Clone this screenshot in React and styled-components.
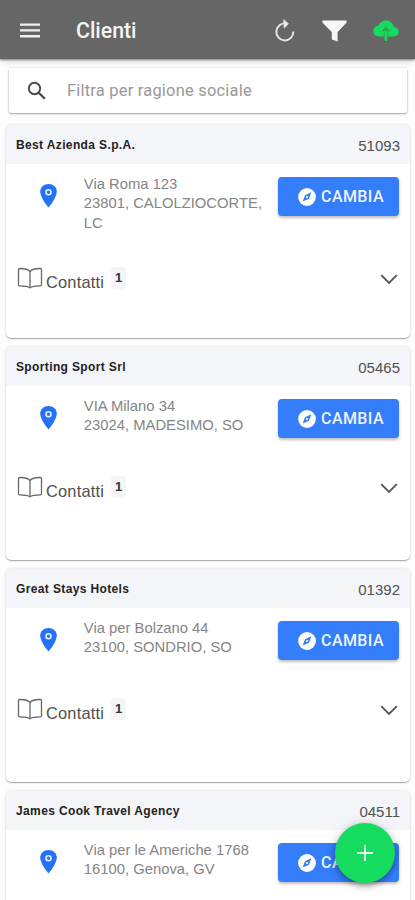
import React from "react";
import styled, { createGlobalStyle } from "styled-components";

const GlobalStyle = createGlobalStyle`
  * {
    box-sizing: border-box;
  }

  body {
    margin: 0;
    background: #fdfdfd;
    font-family: "Liberation Sans", Arial, sans-serif;
    overflow: hidden;
  }

  svg {
    display: block;
    flex-shrink: 0;
  }
`;

const Page = styled.div`
  width: 415px;
  height: 900px;
  overflow: hidden;
  display: flex;
  flex-direction: column;
`;

const Toolbar = styled.header`
  height: 59px;
  flex-shrink: 0;
  padding: 2px 16px 0 20px;
  display: flex;
  align-items: center;
  background: #666666;
  box-shadow: 0 1px 2px rgba(0, 0, 0, 0.45), 0 3px 6px rgba(0, 0, 0, 0.12);
`;

const ToolbarTitle = styled.h1`
  flex: 1;
  margin: 0 0 0 36px;
  font-family: Roboto, sans-serif;
  font-size: 21.3px;
  font-weight: 500;
  line-height: 28px;
  color: #f4f4f4;
`;

const ToolbarActions = styled.div`
  display: flex;
  align-items: center;
  gap: 26px;
`;

const SearchBar = styled.div`
  height: 45px;
  flex-shrink: 0;
  margin: 9px 8px 12px 9px;
  padding-left: 18px;
  display: flex;
  align-items: center;
  gap: 21px;
  background: #ffffff;
  border-radius: 2px;
  box-shadow: 0 1px 2px rgba(0, 0, 0, 0.34), 0 0 2px rgba(0, 0, 0, 0.12);
`;

const SearchInput = styled.input`
  flex: 1;
  min-width: 0;
  padding: 0;
  border: 0;
  outline: 0;
  background: transparent;
  font-family: Roboto, sans-serif;
  font-size: 16.4px;
  letter-spacing: 0.24px;
  color: #444444;

  &::placeholder {
    color: #989898;
    opacity: 1;
  }
`;

const List = styled.main`
  display: flex;
  flex-direction: column;
  gap: 9px;
  padding: 0 5px 0 6px;
`;

const Card = styled.article`
  height: 213px;
  flex-shrink: 0;
  background: #ffffff;
  border-radius: 5px;
  overflow: hidden;
  box-shadow: 0 1px 1px rgba(0, 0, 0, 0.3), 0 0 3px rgba(0, 0, 0, 0.14);
`;

const CardHeader = styled.div`
  height: 39px;
  padding: 0 10px;
  display: flex;
  align-items: center;
  justify-content: space-between;
  background: #f4f5f8;
`;

const CardTitle = styled.h2`
  margin: 0;
  font-size: 12px;
  font-weight: bold;
  letter-spacing: 0.37px;
  color: #222222;
`;

const CardCode = styled.span`
  padding-top: 2px;
  font-size: 15px;
  color: #505050;
`;

const AddressRow = styled.div`
  min-height: 56px;
  display: flex;
  align-items: flex-start;
  padding: 10px 11px 0 34px;
`;

const PinBox = styled.div`
  width: 44px;
  padding-top: 10px;
`;

const Address = styled.address`
  width: 188px;
  padding-top: 1px;
  font-style: normal;
  font-size: 14.8px;
  line-height: 19.4px;
  color: #858585;
`;

const ChangeButton = styled.button`
  width: 121px;
  height: 39px;
  margin: 3px 0 0 7px;
  padding: 0 0 0 5px;
  display: flex;
  align-items: center;
  justify-content: center;
  gap: 5px;
  flex-shrink: 0;
  border: 0;
  border-radius: 4px;
  background: #347dfb;
  box-shadow: 0 2px 3px rgba(0, 0, 0, 0.26);
  font-family: Roboto, sans-serif;
  font-size: 16px;
  font-weight: 500;
  letter-spacing: 0.4px;
  color: #edf4ff;
`;

const ContactsRow = styled.div`
  display: flex;
  align-items: flex-start;
  padding: 34px 12px 0 11px;
`;

const ContactsLabel = styled.span`
  margin: 6px 0 0 3px;
  font-size: 16.4px;
  line-height: 19px;
  letter-spacing: 0.2px;
  color: #505050;
`;

const Badge = styled.span`
  width: 15px;
  height: 22px;
  margin: 0 auto 0 7px;
  border-radius: 4px;
  background: #f4f5f8;
  font-size: 13px;
  font-weight: bold;
  line-height: 21px;
  text-align: center;
  color: #333333;
`;

const ChevronBox = styled.div`
  padding-top: 7px;
`;

const Fab = styled.button`
  position: fixed;
  left: 335px;
  top: 823px;
  width: 60px;
  height: 60px;
  padding: 0;
  display: flex;
  align-items: center;
  justify-content: center;
  border: 0;
  border-radius: 50%;
  background: #15dc5e;
  box-shadow: 0 3px 6px rgba(0, 0, 0, 0.3), 0 1px 12px rgba(0, 0, 0, 0.16);
`;

const MenuIcon = () => (
  <svg width="20" height="15" viewBox="0 0 20 15" fill="#eeeeee">
    <path d="M0 .4h20v2.4H0zM0 6.2h20v2.4H0zM0 12h20v2.4H0z" />
  </svg>
);

const ReloadIcon = () => (
  <svg width="22" height="24" viewBox="0 0 22 24" fill="none">
    <path d="M12.5 4.6A8.500 8.500 0 1 0 19.300 12.500" stroke="#e6e6e6" strokeWidth="1.900" />
    <path d="M9.600 .600 14.600 4.700 10.200 9.200z" fill="#e6e6e6" stroke="#e6e6e6" strokeWidth=".6" />
  </svg>
);

const FunnelIcon = () => (
  <svg width="25" height="22" viewBox="0 0 25 22">
    <path d="M.5.5h24v2.2L15.6 12v9.5l-5.8-2V12L.5 2.7z" fill="#f5f6f9" />
  </svg>
);

const CloudIcon = () => (
  <svg width="26" height="22" viewBox="0 0 26 22" fill="none">
    <path
      d="M12.9.6c-3.4 0-6.3 2-7.2 5C2.5 6.200 .2 8.500 .2 11.300c0 3 2.500 5.200 5.600 5.200h14.800c2.900 0 5.200-1.900 5.200-4.700 0-2.700-2-4.600-5-4.900C20.100 3.100 16.900.6 12.900.6z"
      fill="#15dc5e"
    />
    <path d="M12.9 14v7" stroke="#15dc5e" strokeWidth="2.6" />
    <path d="M9.300 11.300 12.900 7.800l3.600 3.500M12.900 8.300v3" stroke="#3f9258" strokeWidth="1.400" />
    <path d="M11.200 11.500v5M14.600 11.500v5" stroke="#3f9258" strokeWidth=".8" />
  </svg>
);

const SearchIcon = () => (
  <svg width="19" height="19" viewBox="0 0 19 19" fill="none" stroke="#484848">
    <circle cx="7.500" cy="7.500" r="5.700" strokeWidth="1.900" />
    <path d="M11.7 11.7 17.800 17.800" strokeWidth="2.300" />
  </svg>
);

const PinIcon = () => (
  <svg width="17" height="24" viewBox="0 0 17 24">
    <path d="M8.500 0C3.800 0 .2 3.400.2 7.600.2 14.300 8.500 23.500 8.500 23.500s8.300-9.200 8.300-15.900C16.800 3.400 13.200 0 8.500 0z" fill="#2472f5" />
    <circle cx="8.500" cy="8.300" r="2.500" fill="none" stroke="#e6efff" strokeWidth="1.600" />
  </svg>
);

const CompassIcon = () => (
  <svg width="18" height="18" viewBox="0 0 18 18">
    <circle cx="9" cy="9" r="8.900" fill="#ffffff" />
    <path d="M13.300 4.300 11 10.700 4.700 13.600 7 7.300z" fill="#347dfb" />
    <circle cx="9" cy="9" r="1.100" fill="#ffffff" />
  </svg>
);

const BookIcon = () => (
  <svg width="26" height="22" viewBox="0 0 26 22" fill="none" stroke="#666666" strokeWidth="1.300" strokeLinejoin="round">
    <path d="M13 4.500C11 2.200 6.500 1.400 2.500 1.500Q1.500 1.500 1.500 2.500v15.300q0 1 1 1c4 0 8.500.2 10.500 2 2-1.800 6.500-2 10.500-2q1 0 1-1V2.500q0-1-1-1C19.500 1.400 15 2.200 13 4.500z" />
    <path d="M13 4.500v16.300" />
  </svg>
);

const ChevronIcon = () => (
  <svg width="18" height="11" viewBox="0 0 18 11" fill="none">
    <path d="M1.200 1.200 9 9l7.800-7.800" stroke="#555555" strokeWidth="1.900" />
  </svg>
);

const PlusIcon = () => (
  <svg width="18" height="18" viewBox="0 0 18 18">
    <path d="M9 1v16M1 9h16" stroke="#e8ffef" strokeWidth="1.900" />
  </svg>
);

const clients = [
  { name: "Best Azienda S.p.A.", code: "51093", address: ["Via Roma 123", "23801, CALOLZIOCORTE,", "LC"], contacts: 1 },
  { name: "Sporting Sport Srl", code: "05465", address: ["VIA Milano 34", "23024, MADESIMO, SO"], contacts: 1 },
  { name: "Great Stays Hotels", code: "01392", address: ["Via per Bolzano 44", "23100, SONDRIO, SO"], contacts: 1 },
  { name: "James Cook Travel Agency", code: "04511", address: ["Via per le Americhe 1768", "16100, Genova, GV"], contacts: 1 },
];

function ClientCard({ client }) {
  return (
    <Card>
      <CardHeader>
        <CardTitle>{client.name}</CardTitle>
        <CardCode>{client.code}</CardCode>
      </CardHeader>

      <AddressRow>
        <PinBox>
          <PinIcon />
        </PinBox>
        <Address>
          {client.address.map(line => (
            <div key={line}>{line}</div>
          ))}
        </Address>
        <ChangeButton>
          <CompassIcon />
          CAMBIA
        </ChangeButton>
      </AddressRow>

      <ContactsRow>
        <BookIcon />
        <ContactsLabel>Contatti</ContactsLabel>
        <Badge>{client.contacts}</Badge>
        <ChevronBox>
          <ChevronIcon />
        </ChevronBox>
      </ContactsRow>
    </Card>
  );
}

export default function App() {
  return (
    <Page>
      <GlobalStyle />
      <Toolbar>
        <MenuIcon />
        <ToolbarTitle>Clienti</ToolbarTitle>
        <ToolbarActions>
          <ReloadIcon />
          <FunnelIcon />
          <CloudIcon />
        </ToolbarActions>
      </Toolbar>

      <SearchBar>
        <SearchIcon />
        <SearchInput placeholder="Filtra per ragione sociale" />
      </SearchBar>

      <List>
        {clients.map(client => (
          <ClientCard key={client.code} client={client} />
        ))}
      </List>

      <Fab aria-label="Aggiungi">
        <PlusIcon />
      </Fab>
    </Page>
  );
}
